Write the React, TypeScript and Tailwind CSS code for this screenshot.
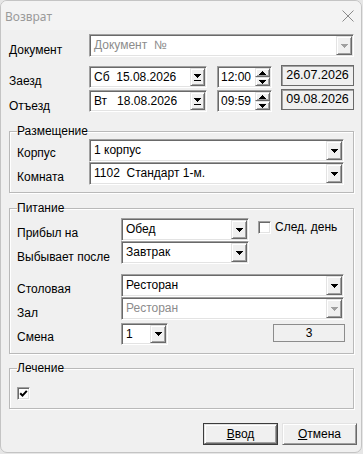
import React from 'react';

const SUNK =
  "bg-white border border-t-[#a0a0a0] border-l-[#a0a0a0] border-r-white border-b-white shadow-[inset_1px_1px_0_#696969,inset_-1px_-1px_0_#e3e3e3]";
const RAISED =
  "bg-[#f0f0f0] border border-t-[#e3e3e3] border-l-[#e3e3e3] border-r-[#696969] border-b-[#696969] shadow-[inset_1px_1px_0_#ffffff,inset_-1px_-1px_0_#a0a0a0]";

function Tri({ w, up = false, color = '#000' }: { w: number; up?: boolean; color?: string }) {
  const n = (w + 1) / 2;
  const rects = [];
  for (let i = 0; i < n; i++) {
    const y = up ? n - 1 - i : i;
    rects.push(<rect key={i} x={i} y={y} width={w - 2 * i} height={1} fill={color} />);
  }
  return (
    <svg width={w} height={n} shapeRendering="crispEdges" className="block">
      {rects}
    </svg>
  );
}

function DateArrow() {
  return (
    <svg width={7} height={7} shapeRendering="crispEdges" className="block">
      <rect x={0} y={0} width={7} height={1} fill="#000" />
      <rect x={1} y={1} width={5} height={1} fill="#000" />
      <rect x={2} y={2} width={3} height={1} fill="#000" />
      <rect x={3} y={3} width={1} height={1} fill="#000" />
      <rect x={0} y={6} width={7} height={1} fill="#000" />
    </svg>
  );
}

function Combo({
  cls,
  text,
  disabled = false,
  date = false,
}: {
  cls: string;
  text: string;
  disabled?: boolean;
  date?: boolean;
}) {
  return (
    <div className={`${SUNK} ${cls} flex shrink-0`}>
      <div className="flex flex-1 p-[1px] min-w-0">
        <div
          className={`flex-1 flex items-center pl-[3px] whitespace-pre text-[12px] ${
            disabled ? 'text-[#8c8c8c]' : 'text-black'
          }`}
        >
          {text}
        </div>
        <div className={`${RAISED} ${date ? 'w-[15px]' : 'w-[16px]'} flex items-center justify-center`}>
          {date ? <DateArrow /> : <Tri w={7} color={disabled ? '#a0a0a0' : '#000'} />}
        </div>
      </div>
    </div>
  );
}

function Spin({ text }: { text: string }) {
  return (
    <div className={`${SUNK} w-[55px] h-[22px] flex shrink-0`}>
      <div className="flex flex-1 p-[1px]">
        <div className="flex-1 flex items-center pl-[2px] text-[12px] text-black">{text}</div>
        <div className="w-[15px] flex flex-col">
          <div className={`${RAISED} flex-1 flex items-center justify-center`}>
            <Tri w={7} up />
          </div>
          <div className={`${RAISED} flex-1 flex items-center justify-center`}>
            <Tri w={7} />
          </div>
        </div>
      </div>
    </div>
  );
}

function Box({ cls, text }: { cls: string; text: string }) {
  return (
    <div
      className={`${cls} border border-[#6a6a6a] shadow-[inset_1px_1px_0_#a0a0a0] flex items-center justify-center text-[12.5px] text-black shrink-0`}
    >
      {text}
    </div>
  );
}

function Check({ checked }: { checked: boolean }) {
  return (
    <div className={`${SUNK} w-[13px] h-[13px] flex items-center justify-center shrink-0`}>
      {checked && (
        <svg width={9} height={9} viewBox="0 0 9 9" className="block">
          <path d="M1.2 4.2 L3.5 6.6 L7.8 1.8" stroke="#000" strokeWidth={2} fill="none" />
        </svg>
      )}
    </div>
  );
}

function Btn({ text, def = false }: { text: React.ReactNode; def?: boolean }) {
  return (
    <div className={`w-[75px] h-[22px] ${def ? 'border border-[#3c3c3c]' : ''}`}>
      <div className={`${RAISED} w-full h-full flex items-center justify-center text-[12px] text-black`}>
        {text}
      </div>
    </div>
  );
}

export default function App() {
  return (
    <div className="w-[363px] h-[454px] bg-[#e6e6e6] font-['Liberation_Sans',Arial,sans-serif] text-[12px] leading-[15px] text-black">
      <div className="w-[362px] h-[453px] bg-[#f0f0f0] border border-[#c4c4c4] rounded-[7px] flex flex-col overflow-hidden">
        {/* title bar */}
        <div className="h-[29px] flex items-center justify-between pl-[4px] pr-[7px] bg-[#f3f3f3] shrink-0">
          <span className="text-[12px] text-[#9a9a9a] font-['Noto_Sans',sans-serif] pt-[1px]">Возврат</span>
          <svg width={12} height={12} viewBox="0 0 12 12" className="block">
            <path d="M0.5 0.5 L11.5 11.5 M11.5 0.5 L0.5 11.5" stroke="#8a8a8a" strokeWidth={1} />
          </svg>
        </div>

        <div className="flex flex-col pl-[8px] pt-[4px]">
          {/* Документ */}
          <div className="flex h-[23px]">
            <div className="w-[80px] pt-[9px]">Документ</div>
            <Combo cls="w-[265px] h-[23px]" text="Документ  №" disabled />
          </div>

          {/* Заезд */}
          <div className="flex h-[22px] mt-[9px]">
            <div className="w-[80px] pt-[8px]">Заезд</div>
            <Combo cls="w-[118px] h-[22px]" text="Сб  15.08.2026" date />
            <div className="ml-[10px]">
              <Spin text="12:00" />
            </div>
            <div className="ml-[9px] -mt-[1px]">
              <Box cls="w-[73px] h-[21px]" text="26.07.2026" />
            </div>
          </div>

          {/* Отъезд */}
          <div className="flex h-[22px] mt-[2px]">
            <div className="w-[80px] pt-[9px]">Отъезд</div>
            <Combo cls="w-[118px] h-[22px]" text="Вт   18.08.2026" date />
            <div className="ml-[10px]">
              <Spin text="09:59" />
            </div>
            <div className="ml-[9px] -mt-[1px]">
              <Box cls="w-[73px] h-[21px]" text="09.08.2026" />
            </div>
          </div>

          {/* Размещение */}
          <fieldset className="w-[345px] mt-[11px] border border-[#b9b9b9] shadow-[inset_1px_1px_0_#ffffff,1px_1px_0_#ffffff] px-[7px] pb-[7px]">
            <legend className="leading-[16px] text-[12px]">Размещение</legend>
            <div className="flex h-[23px]">
              <div className="w-[72px] pt-[7px]">Корпус</div>
              <Combo cls="w-[255px] h-[23px]" text="1 корпус" />
            </div>
            <div className="flex h-[23px]">
              <div className="w-[72px] pt-[8px]">Комната</div>
              <Combo cls="w-[255px] h-[23px]" text="1102  Стандарт 1-м." />
            </div>
          </fieldset>

          {/* Питание */}
          <fieldset className="w-[345px] mt-[7px] border border-[#b9b9b9] shadow-[inset_1px_1px_0_#ffffff,1px_1px_0_#ffffff] px-[7px] pt-[2px] pb-[8px]">
            <legend className="leading-[16px] text-[12px]">Питание</legend>
            <div className="flex h-[23px]">
              <div className="w-[104px] pt-[8px]">Прибыл на</div>
              <Combo cls="w-[128px] h-[23px]" text="Обед" />
              <div className="ml-[9px] mt-[3px]">
                <Check checked={false} />
              </div>
              <div className="ml-[4px] pt-[2px]">След. день</div>
            </div>
            <div className="flex h-[23px]">
              <div className="w-[104px] pt-[9px]">Выбывает после</div>
              <Combo cls="w-[128px] h-[23px]" text="Завтрак" />
            </div>
            <div className="flex h-[23px] mt-[10px]">
              <div className="w-[104px] pt-[8px]">Столовая</div>
              <Combo cls="w-[223px] h-[23px]" text="Ресторан" />
            </div>
            <div className="flex h-[23px]">
              <div className="w-[104px] pt-[9px]">Зал</div>
              <Combo cls="w-[223px] h-[23px]" text="Ресторан" disabled />
            </div>
            <div className="flex h-[22px] mt-[3px]">
              <div className="w-[104px] pt-[7px]">Смена</div>
              <Combo cls="w-[47px] h-[22px]" text="1" />
              <div className="ml-[105px] mt-[1px]">
                <div className="w-[72px] h-[18px] border border-[#8c8c8c] flex items-center justify-center text-[12px]">
                  3
                </div>
              </div>
            </div>
          </fieldset>

          {/* Лечение */}
          <fieldset className="w-[345px] mt-[6px] border border-[#b9b9b9] shadow-[inset_1px_1px_0_#ffffff,1px_1px_0_#ffffff] px-[7px] pt-[11px] pb-[8px]">
            <legend className="leading-[16px] text-[12px]">Лечение</legend>
            <Check checked />
          </fieldset>

          {/* buttons */}
          <div className="flex justify-end gap-[4px] pr-[4px] mt-[14px]">
            <Btn
              def
              text={
                <span>
                  <span className="underline">В</span>вод
                </span>
              }
            />
            <Btn
              text={
                <span>
                  <span className="underline">О</span>тмена
                </span>
              }
            />
          </div>
        </div>
      </div>
    </div>
  );
}
